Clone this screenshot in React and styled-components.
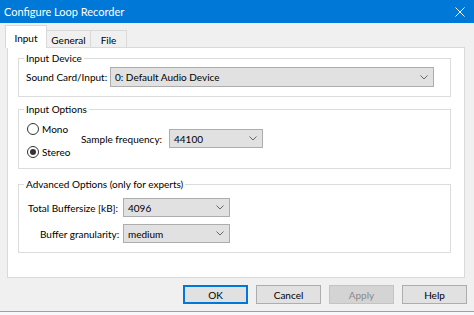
import React from "react";
import styled, { createGlobalStyle } from "styled-components";

const FONT = `Lato, "Noto Sans", "Liberation Sans", sans-serif`;

const GlobalStyle = createGlobalStyle`
  html, body { margin: 0; padding: 0; background: #f0f0f0; }
  body {
    width: 474px; height: 315px; overflow: hidden;
    font-family: ${FONT}; font-size: 10px; color: #000;
  }
  * { box-sizing: border-box; }
`;

const Window = styled.div`
  width: 474px;
  height: 315px;
  display: flex;
  flex-direction: column;
  background: #f0f0f0;
`;

const TitleBar = styled.div`
  flex: none;
  height: 23px;
  background: #0078d7;
  color: #fff;
  display: flex;
  align-items: center;
  justify-content: space-between;
  padding: 0 9px 0 4px;
  font-size: 11px;
`;

const Body = styled.div`
  flex: 1;
  display: flex;
  flex-direction: column;
  padding: 2px 9px 0 7px;
`;

const TabRow = styled.div`
  display: flex;
  align-items: flex-end;
  height: 22px;
  margin-left: -2px;
  position: relative;
  z-index: 1;
`;

const Tab = styled.div`
  width: ${(p) => p.$w}px;
  height: ${(p) => (p.$active ? 23 : 17)}px;
  margin-bottom: ${(p) => (p.$active ? -1 : 0)}px;
  margin-left: ${(p) => (p.$first ? 0 : -1)}px;
  background: ${(p) => (p.$active ? "#fff" : "#f0f0f0")};
  border: 1px solid #d9d9d9;
  border-bottom: none;
  display: flex;
  justify-content: center;
  align-items: flex-start;
  padding-top: ${(p) => (p.$active ? 5 : 2)}px;
  line-height: 14px;
`;

const Panel = styled.div`
  height: 231px;
  background: #fff;
  border: 1px solid #d9d9d9;
  padding: 3px 13px 0 10px;
  display: flex;
  flex-direction: column;
`;

const Group = styled.fieldset`
  margin: ${(p) => p.$mt}px 0 0;
  padding: 0;
  min-width: 0;
  height: ${(p) => p.$h}px;
  border: 1px solid #dcdcdc;
`;

const Legend = styled.legend`
  margin-left: 5px;
  padding: 0 2px;
  line-height: 14px;
  font-size: 10px;
`;

const Row = styled.div`
  display: flex;
  align-items: center;
  padding: ${(p) => p.$pt || 0}px 0 0 ${(p) => p.$pl || 0}px;
`;

const Label = styled.span`
  flex: none;
  width: ${(p) => p.$w}px;
  padding-left: ${(p) => p.$pl || 0}px;
  white-space: nowrap;
`;

const SelectBox = styled.div`
  flex: none;
  width: ${(p) => p.$w}px;
  height: ${(p) => p.$h}px;
  background: #e1e1e1;
  border: 1px solid #adadad;
  display: flex;
  align-items: center;
  justify-content: space-between;
  padding: 0 5px 0 4px;
  white-space: nowrap;
`;

const Options = styled.div`
  display: flex;
  padding: 3px 0 0 8px;
`;

const RadioCol = styled.div`
  flex: none;
  width: 54px;
  display: flex;
  flex-direction: column;
  gap: 3px;
`;

const RadioRow = styled.div`
  height: 20px;
  display: flex;
  align-items: center;
  gap: 3px;
`;

const RadioCircle = styled.span`
  width: 12px;
  height: 12px;
  border-radius: 50%;
  border: 1px solid #333;
  background: #fff;
  display: flex;
  align-items: center;
  justify-content: center;
  &::after {
    content: "";
    width: 6px;
    height: 6px;
    border-radius: 50%;
    background: ${(p) => (p.$checked ? "#333" : "transparent")};
  }
`;

const SampleRow = styled.div`
  display: flex;
  align-items: center;
  margin-top: 10px;
  height: 19px;
`;

const Grid = styled.div`
  display: grid;
  grid-template-columns: 104px auto;
  row-gap: 7px;
  align-items: center;
  padding-top: 7px;
  justify-content: start;
`;

const ButtonRow = styled.div`
  display: flex;
  justify-content: flex-end;
  gap: 8px;
  margin: 7px -2px 0 0;
`;

const Button = styled.div`
  width: 65px;
  height: 19px;
  display: flex;
  align-items: center;
  justify-content: center;
  background: ${(p) => (p.$disabled ? "#d4d4d4" : "#e1e1e1")};
  color: ${(p) => (p.$disabled ? "#8a8a8a" : "#000")};
  border: 1px solid ${(p) => (p.$primary ? "#0078d7" : p.$disabled ? "#c4c4c4" : "#adadad")};
  box-shadow: ${(p) => (p.$primary ? "inset 0 0 0 1px #0078d7" : "none")};
`;

const BottomEdge = styled.div`
  flex: none;
  height: 4px;
  border-top: 1px solid #6aaee6;
  background: #f6f9fc;
`;

const Chevron = () => (
  <svg width="8" height="5" viewBox="0 0 8 5">
    <path d="M0.5 0.5 L4 4 L7.5 0.5" fill="none" stroke="#666" strokeWidth="1" />
  </svg>
);

const CloseIcon = () => (
  <svg width="10" height="10" viewBox="0 0 10 10">
    <path d="M0.5 0.5 L9.5 9.5 M9.5 0.5 L0.5 9.5" stroke="#fff" strokeWidth="1" />
  </svg>
);

const Select = ({ w, h, value }) => (
  <SelectBox $w={w} $h={h}>
    <span>{value}</span>
    <Chevron />
  </SelectBox>
);

const Radio = ({ checked, label }) => (
  <RadioRow>
    <RadioCircle $checked={checked} />
    <span>{label}</span>
  </RadioRow>
);

export default function App() {
  return (
    <>
      <GlobalStyle />
      <Window>
        <TitleBar>
          <span>Configure Loop Recorder</span>
          <CloseIcon />
        </TitleBar>
        <Body>
          <TabRow>
            <Tab $w={42} $active $first>Input</Tab>
            <Tab $w={45}>General</Tab>
            <Tab $w={37}>File</Tab>
          </TabRow>
          <Panel>
            <Group $mt={0} $h={46}>
              <Legend>Input Device</Legend>
              <Row $pt={2} $pl={7}>
                <Label $w={84}>Sound Card/Input:</Label>
                <Select w={324} h={20} value="0: Default Audio Device" />
              </Row>
            </Group>
            <Group $mt={5} $h={67}>
              <Legend>Input Options</Legend>
              <Options>
                <RadioCol>
                  <Radio label="Mono" />
                  <Radio label="Stereo" checked />
                </RadioCol>
                <SampleRow>
                  <Label $w={88}>Sample frequency:</Label>
                  <Select w={94} h={19} value="44100" />
                </SampleRow>
              </Options>
            </Group>
            <Group $mt={8} $h={76}>
              <Legend>Advanced Options (only for experts)</Legend>
              <Grid>
                <Label $w={104} $pl={9}>Total Buffersize [kB]:</Label>
                <Select w={107} h={19} value="4096" />
                <Label $w={104} $pl={21}>Buffer granularity:</Label>
                <Select w={107} h={19} value="medium" />
              </Grid>
            </Group>
          </Panel>
          <ButtonRow>
            <Button $primary>OK</Button>
            <Button>Cancel</Button>
            <Button $disabled>Apply</Button>
            <Button>Help</Button>
          </ButtonRow>
        </Body>
        <BottomEdge />
      </Window>
    </>
  );
}
